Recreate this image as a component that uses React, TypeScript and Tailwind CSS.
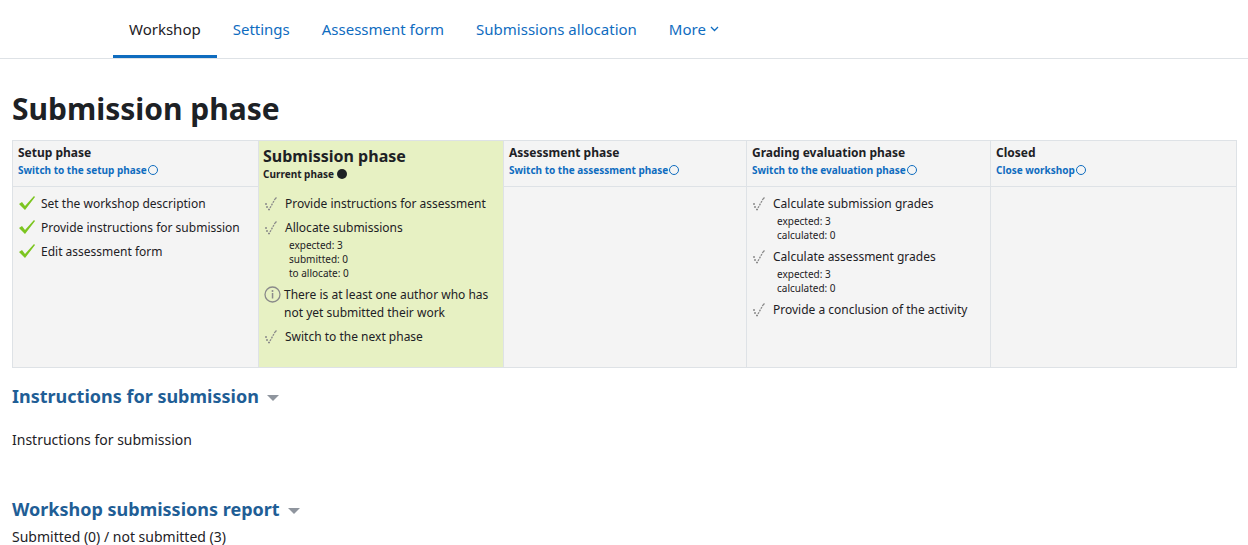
const todo = (
  <svg width="16" height="14" viewBox="0 0 16 14" className="shrink-0 mt-[2px]">
    <g stroke="#8a8a8a" strokeWidth="1.3" fill="none">
      <path d="M1 7h3M2 10h3M4 12.5h2M6 11l5-9" strokeDasharray="2 1" />
      <path d="M11 2l1.5-1.5" />
    </g>
  </svg>
);

const check = (
  <svg width="18" height="16" viewBox="0 0 18 16" className="shrink-0">
    <path d="M1 9l3-2 3 4 9-10 1 1-10 13z" fill="#7cc520" />
  </svg>
);

const ring = <span className="inline-block w-[10px] h-[10px] rounded-full border border-[#0f6cbf] ml-[1px] align-[-1px]" />;

function Item({ icon, text, sub }: { icon: React.ReactNode; text: string; sub?: string[] }) {
  return (
    <div className="mb-[6px]">
      <div className="flex gap-[5px] items-start leading-[18px]">
        {icon}
        <span>{text}</span>
      </div>
      {sub && (
        <div className="pl-[25px] text-[10px] leading-[14px] mt-[1px]">
          {sub.map((s) => (
            <div key={s}>{s}</div>
          ))}
        </div>
      )}
    </div>
  );
}

function Head({ title, link }: { title: string; link: string }) {
  return (
    <div className="h-[46px] px-[5px] pt-[4px] border-b border-[#dee2e6]">
      <div className="text-[12px] font-bold leading-[16px]">{title}</div>
      <div className="text-[10px] font-bold text-[#0f6cbf] leading-[16px] mt-[1px]">
        {link}
        {ring}
      </div>
    </div>
  );
}

export default function App() {
  return (
    <div className="font-['Liberation_Sans',Arial,sans-serif] text-[#1d2125] bg-white min-h-[545px]">
      <div className="h-[59px] border-b border-[#dee2e6] flex pl-[113px] text-[15px] text-[#0f6cbf]">
        <div className="px-[16px] flex items-center border-b-[3px] border-[#0f6cbf] text-[#1d2125] pt-[3px]">Workshop</div>
        <div className="px-[16px] flex items-center">Settings</div>
        <div className="px-[16px] flex items-center">Assessment form</div>
        <div className="px-[16px] flex items-center">Submissions allocation</div>
        <div className="px-[16px] flex items-center gap-1">
          More
          <svg width="9" height="6" viewBox="0 0 9 6"><path d="M1 1l3.5 3.5L8 1" stroke="#0f6cbf" strokeWidth="1.3" fill="none" /></svg>
        </div>
      </div>
      <div className="px-[12px]">
        <h1 className="text-[30px] font-bold leading-[36px] mt-[32px] mb-[13px]">Submission phase</h1>
        <div className="grid grid-cols-[246px_244px_244px_244px_1fr] border border-[#dee2e6] bg-[#f4f4f4] w-[1225px] h-[228px] text-[12px]">
          <div className="flex flex-col border-r border-[#dee2e6]">
            <Head title="Setup phase" link="Switch to the setup phase" />
            <div className="p-[5px] pt-[8px]">
              <Item icon={check} text="Set the workshop description" />
              <Item icon={check} text="Provide instructions for submission" />
              <Item icon={check} text="Edit assessment form" />
            </div>
          </div>
          <div className="bg-[#e7f1c3] flex flex-col">
            <div className="h-[46px] px-[4px] pt-[6px]">
              <div className="text-[16px] font-bold leading-[18px]">Submission phase</div>
              <div className="text-[10px] font-bold leading-[16px] mt-[1px] flex items-center gap-[3px]">
                Current phase <span className="inline-block w-[10px] h-[10px] rounded-full bg-[#1d2125]" />
              </div>
            </div>
            <div className="p-[5px] pt-[8px]">
              <Item icon={todo} text="Provide instructions for assessment" />
              <Item icon={todo} text="Allocate submissions" sub={["expected: 3", "submitted: 0", "to allocate: 0"]} />
              <div className="flex gap-[3px] items-start leading-[18px] mb-[6px]">
                <svg width="17" height="17" viewBox="0 0 17 17" className="shrink-0">
                  <circle cx="8.5" cy="8.5" r="7.5" stroke="#8a8a8a" strokeWidth="1.3" fill="none" />
                  <rect x="7.8" y="7" width="1.5" height="5.5" fill="#8a8a8a" />
                  <circle cx="8.5" cy="5" r="1" fill="#8a8a8a" />
                </svg>
                <span>There is at least one author who has not yet submitted their work</span>
              </div>
              <Item icon={todo} text="Switch to the next phase" />
            </div>
          </div>
          <div className="flex flex-col border-x border-[#dee2e6]">
            <Head title="Assessment phase" link="Switch to the assessment phase" />
          </div>
          <div className="flex flex-col border-r border-[#dee2e6]">
            <Head title="Grading evaluation phase" link="Switch to the evaluation phase" />
            <div className="p-[5px] pt-[8px]">
              <Item icon={todo} text="Calculate submission grades" sub={["expected: 3", "calculated: 0"]} />
              <Item icon={todo} text="Calculate assessment grades" sub={["expected: 3", "calculated: 0"]} />
              <Item icon={todo} text="Provide a conclusion of the activity" />
            </div>
          </div>
          <div className="flex flex-col">
            <Head title="Closed" link="Close workshop" />
          </div>
        </div>
        <h3 className="text-[18px] font-bold text-[#1f5e96] mt-[15px] flex items-center gap-[8px]">
          Instructions for submission
          <span className="w-0 h-0 border-x-[6px] border-x-transparent border-t-[6px] border-t-[#8f959e] mt-[2px]" />
        </h3>
        <p className="text-[14px] mt-[19px]">Instructions for submission</p>
        <h3 className="text-[18px] font-bold text-[#1f5e96] mt-[46px] flex items-center gap-[8px]">
          Workshop submissions report
          <span className="w-0 h-0 border-x-[6px] border-x-transparent border-t-[6px] border-t-[#8f959e] mt-[2px]" />
        </h3>
        <p className="text-[14px] mt-[3px]">Submitted (0) / not submitted (3)</p>
      </div>
    </div>
  );
}
